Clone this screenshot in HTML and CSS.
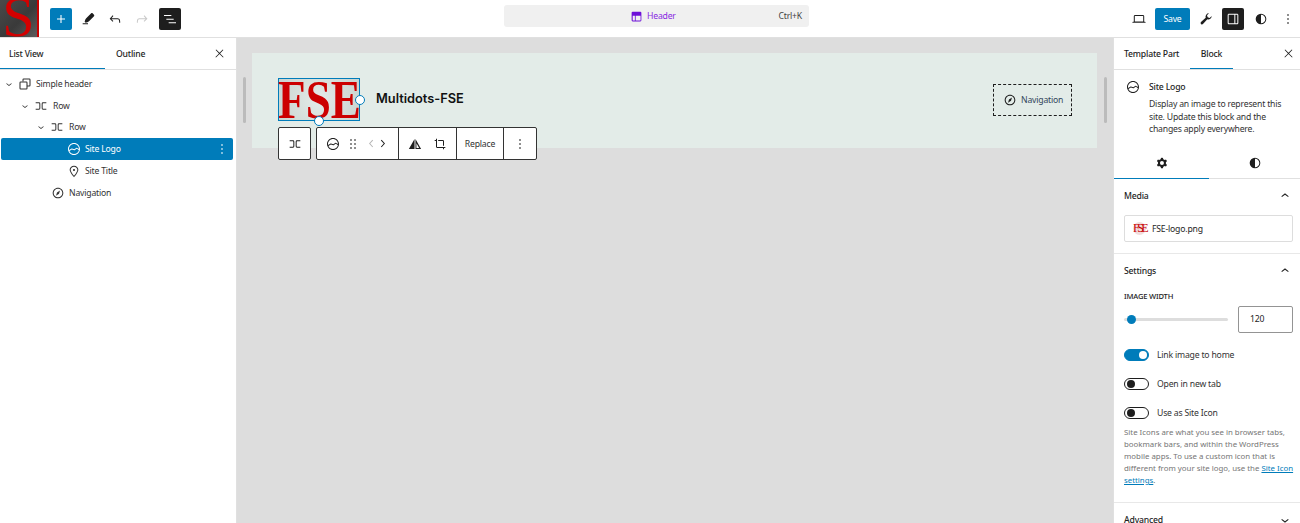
FILE: index.html
```html
<!DOCTYPE html>
<html lang="en">
<head>
<meta charset="utf-8">
<title>Site Editor</title>
<link rel="stylesheet" href="styles.css">
</head>
<body>
<svg class="defs" width="0" height="0" aria-hidden="true">
<symbol id="i-plus" viewBox="0 0 24 24"><path d="M18 11.2h-5.2V6h-1.6v5.2H6v1.6h5.2V18h1.6v-5.2H18z"/></symbol>
<symbol id="i-pen" viewBox="0 0 24 24"><path d="M4 20h8v-1.5H4V20zM18.9 3.5c-.6-.6-1.5-.6-2.1 0l-7.5 7.5c-1.3 1.3-1.7 3.3-2.3 5.1l1.4 1.4c1.8-.6 3.8-1 5.1-2.3l7.5-7.5c.6-.6.6-1.5 0-2.1z"/></symbol>
<symbol id="i-undo" viewBox="0 0 24 24"><path d="M18.3 11.7c-.6-.6-1.4-.9-2.3-.9H6.7l2.9-3.3-1.1-1-4.5 5L8.5 16l1-1-2.7-2.7H16c.5 0 .9.2 1.3.5 1 1 1 3.4 1 4.5v.3h1.5v-.2c0-1.5 0-4.3-1.5-5.7z"/></symbol>
<symbol id="i-redo" viewBox="0 0 24 24"><path d="M15.6 6.5l-1.1 1 2.9 3.3H8c-.9 0-1.7.3-2.3.9-1.4 1.5-1.4 4.2-1.4 5.6v.2h1.5v-.3c0-1.1 0-3.5 1-4.5.3-.3.7-.5 1.3-.5h9.2L14.5 15l1.1 1.1 4.6-4.6-4.6-5z"/></symbol>
<symbol id="i-list" viewBox="0 0 24 24"><path d="M3 6h11v1.5H3V6zm3.5 5.5h11V13h-11v-1.5zM21 17H10v1.5h11V17z"/></symbol>
<symbol id="i-laptop" viewBox="0 0 24 24"><path d="M20.5 16h-.7V8c0-1.1-.9-2-2-2H6.2c-1.1 0-2 .9-2 2v8h-.7c-.8 0-1.5.7-1.5 1.5h20c0-.8-.7-1.5-1.5-1.5zM5.7 8c0-.3.2-.5.5-.5h11.6c.3 0 .5.2.5.5v7.6H5.7V8z"/></symbol>
<symbol id="i-wrench" viewBox="0 0 24 24"><path d="M20.5 7.5a5 5 0 0 1-6.5 5l-6.5 7a2 2 0 0 1-3-3l7-6.5a5 5 0 0 1 5-6.5l-3 3 1 3 3 1z"/></symbol>
<symbol id="i-sidebar" viewBox="0 0 24 24"><path d="M18 4H6c-1.1 0-2 .9-2 2v12c0 1.1.9 2 2 2h12c1.1 0 2-.9 2-2V6c0-1.1-.9-2-2-2zM14 18.5H6c-.3 0-.5-.2-.5-.5V6c0-.3.2-.5.5-.5h8v13zm4.500-.5c0 .3-.2.5-.5.5h-2.500v-13H18c.3 0 .5.2.5.5v12z"/></symbol>
<symbol id="i-half" viewBox="0 0 24 24"><path fill-rule="evenodd" d="M12 4a8 8 0 1 0 0 16 8 8 0 0 0 0-16zm0 1.500a6.500 6.500 0 0 1 0 13z"/></symbol>
<symbol id="i-more" viewBox="0 0 24 24"><path d="M13 19h-2v-2h2v2zm0-6h-2v-2h2v2zm0-6h-2V5h2v2z"/></symbol>
<symbol id="i-close" viewBox="0 0 24 24"><path d="M13 11.800l6.100-6.300-1-1-6.100 6.200-6.100-6.200-1 1 6.100 6.300-6.500 6.700 1 1 6.500-6.600 6.500 6.600 1-1z"/></symbol>
<symbol id="i-down" viewBox="0 0 24 24"><path d="M17.500 11.600L12 16l-5.500-4.400.9-1.200L12 14l4.500-3.600 1 1.200z"/></symbol>
<symbol id="i-up" viewBox="0 0 24 24"><path d="M6.500 12.400L12 8l5.500 4.400-.9 1.200L12 10l-4.500 3.600-1-1.200z"/></symbol>
<symbol id="i-row" viewBox="0 0 24 24"><path d="M4 6.500h5a2 2 0 0 1 2 2v7a2 2 0 0 1-2 2H4V16h5a.5.5 0 0 0 .5-.5v-7A.5.5 0 0 0 9 8H4V6.500Zm16 0h-5a2 2 0 0 0-2 2v7a2 2 0 0 0 2 2h5V16h-5a.5.5 0 0 1-.5-.5v-7A.5.5 0 0 1 15 8h5V6.500Z"/></symbol>
<symbol id="i-pattern" viewBox="0 0 24 24"><path fill="none" stroke="currentColor" stroke-width="1.600" d="M9 8V5.500a1 1 0 0 1 1-1h8.500a1 1 0 0 1 1 1V14a1 1 0 0 1-1 1H15M5.500 9H14a1 1 0 0 1 1 1v8.500a1 1 0 0 1-1 1H5.500a1 1 0 0 1-1-1V10a1 1 0 0 1 1-1z"/></symbol>
<symbol id="i-logo" viewBox="0 0 24 24"><path d="M12 3c-5 0-9 4-9 9s4 9 9 9 9-4 9-9-4-9-9-9zm0 1.500c4.100 0 7.500 3.400 7.500 7.500v.1c-1.400-.8-3.300-1.700-3.400-1.800-.2-.1-.5-.1-.8.1l-2.900 2.100L9 11.300c-.2-.1-.4 0-.6.1l-3.700 2.200c-.1-.5-.2-1-.2-1.500 0-4.200 3.400-7.600 7.500-7.600zm0 15c-3.100 0-5.700-1.900-6.900-4.500l3.700-2.200 3.500 1.200c.2.1.5 0 .7-.1l2.900-2.100c.8.4 2.500 1.200 3.500 1.900-.9 3.300-3.900 5.800-7.400 5.800z"/></symbol>
<symbol id="i-pin" viewBox="0 0 24 24"><path d="M12 9c-.8 0-1.500.7-1.500 1.500S11.200 12 12 12s1.500-.7 1.500-1.500S12.800 9 12 9zm0-5c-3.600 0-6.500 2.800-6.500 6.200 0 .8.3 1.800.9 3.100.5 1.100 1.200 2.300 2 3.600.7 1 3 3.800 3.200 3.900l.4.5.4-.5c.2-.2 2.600-2.900 3.200-3.900.8-1.200 1.500-2.500 2-3.600.6-1.300.9-2.300.9-3.100C18.500 6.800 15.600 4 12 4zm4.300 8.700c-.5 1-1.100 2.200-1.900 3.400-.5.7-1.700 2.200-2.400 3-.7-.8-1.900-2.300-2.400-3-.8-1.200-1.400-2.300-1.900-3.300-.6-1.400-.7-2.200-.7-2.500 0-2.600 2.200-4.700 5-4.700s5 2.100 5 4.700c0 .2-.1 1-.7 2.400z"/></symbol>
<symbol id="i-nav" viewBox="0 0 24 24"><path d="M12 4c-4.400 0-8 3.600-8 8s3.600 8 8 8 8-3.600 8-8-3.600-8-8-8zm0 14.500c-3.600 0-6.500-2.900-6.500-6.500S8.400 5.500 12 5.500s6.500 2.900 6.500 6.500-2.900 6.500-6.500 6.500zM9 16l4.500-3L15 8.400l-4.500 3L9 16z"/></symbol>
<symbol id="i-drag" viewBox="0 0 24 24"><path d="M8 7h2V5H8v2zm0 6h2v-2H8v2zm0 6h2v-2H8v2zm6-14v2h2V5h-2zm0 8h2v-2h-2v2zm0 6h2v-2h-2v2z"/></symbol>
<symbol id="i-left" viewBox="0 0 24 24"><path d="M14.600 7l-1.200-1L8 12l5.400 6 1.200-1-4.600-5z"/></symbol>
<symbol id="i-right" viewBox="0 0 24 24"><path d="M10.600 6L9.400 7l4.600 5-4.600 5 1.200 1 5.400-6z"/></symbol>
<symbol id="i-flip" viewBox="0 0 24 24"><path fill-rule="evenodd" d="M11.300 4.500v15H2.800zM12.700 4.500l8.500 15h-8.500zM14.200 11v7h4z"/></symbol>
<symbol id="i-crop" viewBox="0 0 24 24"><path d="M18 20v-2h2v-1.500H7.750a.25.25 0 0 1-.25-.25V4H6v2H4v1.500h2v8.750c0 .966.784 1.750 1.750 1.750h8.750v2H18ZM9.273 7.500h6.977a.25.25 0 0 1 .25.25v6.977H18V7.750A1.750 1.750 0 0 0 16.250 6H9.273v1.500Z"/></symbol>
<symbol id="i-cog" viewBox="0 0 24 24"><path fill-rule="evenodd" d="M10.289 4.836A1 1 0 0 1 11.275 4h1.306a1 1 0 0 1 .987.836l.244 1.466c.787.26 1.503.679 2.108 1.218l1.393-.522a1 1 0 0 1 1.216.437l.653 1.130a1 1 0 0 1-.23 1.273l-1.148.944a6.025 6.025 0 0 1 0 2.435l1.149.946a1 1 0 0 1 .23 1.272l-.653 1.130a1 1 0 0 1-1.216.437l-1.394-.522c-.605.54-1.320.958-2.108 1.218l-.244 1.466a1 1 0 0 1-.987.836h-1.306a1 1 0 0 1-.986-.836l-.244-1.466a5.995 5.995 0 0 1-2.108-1.218l-1.394.522a1 1 0 0 1-1.217-.436l-.653-1.131a1 1 0 0 1 .23-1.272l1.149-.946a6.026 6.026 0 0 1 0-2.435l-1.148-.944a1 1 0 0 1-.23-1.272l.653-1.131a1 1 0 0 1 1.217-.437l1.393.522a5.994 5.994 0 0 1 2.108-1.218l.244-1.466ZM14.929 12a3 3 0 1 1-6 0 3 3 0 0 1 6 0Z"/></symbol>
<symbol id="i-template" viewBox="0 0 24 24"><path fill-rule="evenodd" d="M5 3h14a2 2 0 0 1 2 2v14a2 2 0 0 1-2 2H5a2 2 0 0 1-2-2V5a2 2 0 0 1 2-2zm0 7.500V19a.5.5 0 0 0 .5.5h3.500v-9zm5.500 0v9H18.500a1 1 0 0 0 1-1v-8z"/></symbol>
</svg>

<div class="app">
  <header class="topbar">
    <div class="top-left">
      <a class="site-badge"><span>S</span></a>
      <div class="tools">
        <button class="btn btn-add"><svg class="ic"><use href="#i-plus"/></svg></button>
        <button class="btn"><svg class="ic"><use href="#i-pen"/></svg></button>
        <button class="btn"><svg class="ic"><use href="#i-undo"/></svg></button>
        <button class="btn btn-off"><svg class="ic"><use href="#i-redo"/></svg></button>
        <button class="btn btn-dark btn-list"><svg class="ic"><use href="#i-list"/></svg></button>
      </div>
    </div>
    <div class="command">
      <div class="command-title"><svg class="ic ic-template"><use href="#i-template"/></svg><span>Header</span></div>
      <span class="shortcut">Ctrl+K</span>
    </div>
    <div class="top-right">
      <button class="btn"><svg class="ic"><use href="#i-laptop"/></svg></button>
      <button class="save">Save</button>
      <button class="btn"><svg class="ic"><use href="#i-wrench"/></svg></button>
      <button class="btn btn-dark btn-side"><svg class="ic"><use href="#i-sidebar"/></svg></button>
      <button class="btn"><svg class="ic"><use href="#i-half"/></svg></button>
      <button class="btn"><svg class="ic"><use href="#i-more"/></svg></button>
    </div>
  </header>

  <div class="main">
    <aside class="left-panel">
      <div class="tabs">
        <div class="tab tab-on tab-list">List View</div>
        <div class="tab tab-outline">Outline</div>
        <svg class="ic tabs-close"><use href="#i-close"/></svg>
      </div>
      <ul class="tree">
        <li class="node lv0"><svg class="ic-s"><use href="#i-down"/></svg><svg class="ic"><use href="#i-pattern"/></svg><span>Simple header</span></li>
        <li class="node lv1"><svg class="ic-s"><use href="#i-down"/></svg><svg class="ic"><use href="#i-row"/></svg><span>Row</span></li>
        <li class="node lv2"><svg class="ic-s"><use href="#i-down"/></svg><svg class="ic"><use href="#i-row"/></svg><span>Row</span></li>
        <li class="node lv3 node-on"><svg class="ic"><use href="#i-logo"/></svg><span>Site Logo</span><svg class="ic node-more"><use href="#i-more"/></svg></li>
        <li class="node lv3"><svg class="ic"><use href="#i-pin"/></svg><span>Site Title</span></li>
        <li class="node lv2b"><svg class="ic"><use href="#i-nav"/></svg><span>Navigation</span></li>
      </ul>
    </aside>

    <section class="canvas">
      <i class="grip grip-left"></i>
      <div class="frame">
        <div class="frame-brand">
          <div class="logo-box">
            <span class="logo-text">FSE</span>
            <i class="handle handle-right"></i>
            <i class="handle handle-bottom"></i>
          </div>
          <div class="site-name">Multidots-FSE</div>
        </div>
        <div class="nav-holder"><svg class="ic"><use href="#i-nav"/></svg><span>Navigation</span></div>
      </div>
      <i class="grip grip-right"></i>

      <div class="block-toolbar">
        <div class="tb-group"><button class="tb-btn"><svg class="ic"><use href="#i-row"/></svg></button></div>
        <div class="tb-group">
          <div class="tb-sec tb-sec-a">
            <svg class="ic"><use href="#i-logo"/></svg>
            <svg class="ic"><use href="#i-drag"/></svg>
            <span class="movers"><svg class="ic-m off"><use href="#i-left"/></svg><svg class="ic-m ic-next"><use href="#i-right"/></svg></span>
          </div>
          <div class="tb-sec tb-sec-b">
            <svg class="ic"><use href="#i-flip"/></svg>
            <svg class="ic"><use href="#i-crop"/></svg>
          </div>
          <div class="tb-sec tb-sec-c">Replace</div>
          <div class="tb-sec tb-sec-d"><svg class="ic"><use href="#i-more"/></svg></div>
        </div>
      </div>
    </section>

    <aside class="right-panel">
      <div class="tabs">
        <div class="tab tab-part">Template Part</div>
        <div class="tab tab-on tab-block">Block</div>
        <svg class="ic tabs-close tabs-close-r"><use href="#i-close"/></svg>
      </div>
      <div class="card">
        <svg class="ic"><use href="#i-logo"/></svg>
        <div class="card-body">
          <h2 class="card-title">Site Logo</h2>
          <p class="card-desc">Display an image to represent this site. Update this block and the changes apply everywhere.</p>
        </div>
      </div>
      <div class="style-tabs">
        <div class="style-tab style-tab-on"><svg class="ic"><use href="#i-cog"/></svg></div>
        <div class="style-tab"><svg class="ic"><use href="#i-half"/></svg></div>
      </div>
      <section class="panel panel-media">
        <div class="panel-head"><h3>Media</h3><svg class="ic"><use href="#i-up"/></svg></div>
        <div class="media-file"><span class="media-thumb">FSE</span><span>FSE-logo.png</span></div>
      </section>
      <section class="panel panel-settings">
        <div class="panel-head"><h3>Settings</h3><svg class="ic"><use href="#i-up"/></svg></div>
        <div class="field-label">IMAGE WIDTH</div>
        <div class="range-row">
          <div class="range"><i class="range-thumb"></i></div>
          <div class="num-input">120</div>
        </div>
        <div class="toggle-row"><i class="toggle toggle-on"></i><span>Link image to home</span></div>
        <div class="toggle-row"><i class="toggle"></i><span>Open in new tab</span></div>
        <div class="toggle-row toggle-row-last"><i class="toggle"></i><span>Use as Site Icon</span></div>
        <p class="help">Site Icons are what you see in browser tabs, bookmark bars, and within the WordPress mobile apps. To use a custom icon that is different from your site logo, use the <a>Site Icon settings</a>.</p>
      </section>
      <section class="panel panel-adv">
        <div class="panel-head"><h3>Advanced</h3><svg class="ic"><use href="#i-down"/></svg></div>
      </section>
    </aside>
  </div>
</div>
</body>
</html>
```

FILE: styles.css
```css
* { box-sizing: border-box; }
html, body { margin: 0; padding: 0; }
body { font-family: "Noto Sans", "Open Sans", sans-serif; font-size: 8.670px; letter-spacing: -.2px; color: #1e1e1e; background: #fff; }
.defs { position: absolute; }
svg { fill: currentColor; display: block; flex: none; }
.ic { width: 16px; height: 16px; }
.ic-s { width: 12px; height: 12px; }
.ic-m { width: 15px; height: 15px; }
button { font: inherit; letter-spacing: inherit; color: inherit; background: none; border: 0; padding: 0; }
h2, h3, p, ul { margin: 0; padding: 0; list-style: none; font: inherit; }

.app { width: 1300px; height: 523px; display: flex; flex-direction: column; overflow: hidden; }

/* top bar */
.topbar { height: 38px; flex: none; display: flex; border-bottom: 1px solid #e0e0e0; }
.top-left { flex: 0 0 504px; display: flex; }
.site-badge { width: 39px; height: 37px; background: linear-gradient(135deg, #4a4a4a, #3a3a3a 55%, #5c5c5c); border-right: 2px solid #c80000; overflow: hidden; display: flex; justify-content: center; }
.site-badge span { font-family: "Liberation Serif", serif; font-size: 58px; line-height: 37px; color: #d30000; margin-top: -2px; letter-spacing: 0; }
.tools { display: flex; align-items: center; gap: 5px; padding-left: 11px; }
.btn { width: 22px; height: 22px; display: flex; align-items: center; justify-content: center; border-radius: 2px; }
.btn-add { background: #007cba; color: #fff; }
.btn-off { color: #c9c9c9; }
.btn-dark { background: #1e1e1e; color: #fff; }
.btn-list { margin-left: 1px; }
.btn-side { margin-right: 1px; }

.command { flex: 0 0 305px; height: 22px; margin-top: 5px; background: #f0f0f0; border-radius: 3px; display: flex; align-items: center; padding: 0 7px 0 126px; justify-content: space-between; }
.command-title { display: flex; align-items: center; gap: 4px; color: #8a2be2; }
.ic-template { width: 13px; height: 13px; color: #6d10d8; }
.shortcut { color: #444; }

.top-right { flex: 1; display: flex; align-items: center; justify-content: flex-end; gap: 5px; padding-right: 1px; }
.save { width: 35px; height: 22px; background: #007cba; color: #fff; border-radius: 2px; text-align: center; }

/* shared */
.main { flex: 1; display: flex; min-height: 0; }
.tabs { height: 32px; display: flex; align-items: flex-start; border-bottom: 1px solid #e0e0e0; }
.tab { height: 31px; line-height: 33px; font-weight: 500; }
.tab-on { border-bottom: 1.500px solid #007cba; }
.tabs-close { width: 13px; height: 13px; margin: 9px 10px 0 auto; }
.tabs-close-r { margin-right: 5px; }

/* list view */
.left-panel { flex: 0 0 237px; border-right: 1px solid #e0e0e0; }
.tab-list { width: 105px; padding-left: 9px; }
.tab-outline { padding-left: 11px; }
.tree { padding: 3px 3px 0 1px; }
.node { height: 21.800px; display: flex; align-items: center; gap: 2px; color: #333; border-radius: 2px; }
.node span { margin-left: 1px; }
.lv0 { padding-left: 2px; }
.lv1 { padding-left: 18px; }
.lv2 { padding-left: 34px; }
.lv1 span, .lv2 span { margin-left: 2px; }
.lv3 { padding-left: 65px; gap: 3px; }
.lv3 span { margin-left: 0; }
.lv2b { padding-left: 49px; gap: 2px; }
.node-on { background: #007cba; color: #fff; }
.node-more { margin-left: auto; margin-right: 3px; }

/* canvas */
.canvas { flex: 1; background: #ddd; position: relative; padding: 15px 16px 0 15px; min-width: 0; }
.grip { position: absolute; width: 3px; height: 46px; top: 39px; background: #bbb; border-radius: 2px; }
.grip-left { left: 6px; }
.grip-right { right: 6px; }
.frame { height: 95px; background: #e3ece8; display: flex; align-items: center; justify-content: space-between; padding: 0 25px 0 26px; }
.frame-brand { display: flex; align-items: center; gap: 16px; }
.logo-box { width: 82px; height: 43px; border: 1px solid #007cba; background: radial-gradient(circle, #e4ebe8, #c9d4d0); position: relative; display: flex; align-items: center; justify-content: center; margin-top: -2px; }
.logo-text { font-family: "Liberation Serif", serif; font-size: 55px; font-weight: 700; line-height: 41px; color: #cc0000; letter-spacing: 0; white-space: nowrap; transform: scaleX(.82); }
.handle { position: absolute; width: 10px; height: 10px; background: #fff; border: 1.500px solid #007cba; border-radius: 50%; }
.handle-right { right: -6px; top: 16px; }
.handle-bottom { bottom: -6px; left: 35px; }
.site-name { font-family: Inter, "Noto Sans", sans-serif; font-size: 12.800px; font-weight: 600; color: #111; letter-spacing: 0; margin-top: -5px; }
.nav-holder { width: 79px; height: 32px; border: 1px dashed #1e1e1e; display: flex; align-items: center; gap: 3px; padding-left: 8px; color: #33475b; margin-top: -1px; }
.nav-holder .ic { color: #1e1e1e; }

.block-toolbar { position: absolute; left: 41px; top: 89px; display: flex; gap: 5px; }
.tb-group { height: 33px; background: #fff; border: 1px solid #333; border-radius: 2px; display: flex; }
.tb-btn { width: 31px; display: flex; align-items: center; justify-content: center; }
.tb-sec { display: flex; align-items: center; border-left: 1px solid #333; }
.tb-sec:first-child { border-left: 0; }
.tb-sec-a { width: 81px; padding-left: 8px; gap: 4px; }
.movers { display: flex; margin-left: -1px; }
.ic-next { margin-left: -4px; }
.off { color: #b5b5b5; }
.tb-sec-b { width: 58px; padding-left: 8px; gap: 9px; }
.tb-sec-c { width: 47px; justify-content: center; color: #333; }
.tb-sec-d { width: 33px; justify-content: center; }

/* sidebar */
.right-panel { flex: 0 0 187px; border-left: 1px solid #e0e0e0; overflow: hidden; }
.tab-part { width: 66px; margin-left: 10px; }
.tab-block { width: 43px; text-align: center; }
.card { display: flex; gap: 8px; padding: 9px 12px 0 11px; height: 78px; }
.card-title { font-weight: 500; line-height: 16px; }
.card-desc { line-height: 12.500px; color: #333; margin-top: 3px; }
.style-tabs { display: flex; height: 31px; border-bottom: 1px solid #e0e0e0; }
.style-tab { flex: 1; display: flex; align-items: center; justify-content: center; }
.style-tab-on { flex: 0 0 95px; border-bottom: 1.500px solid #007cba; height: 31px; }
.panel { border-bottom: 1px solid #e8e8e8; padding: 0 7px 0 10px; }
.panel-head { height: 34px; display: flex; align-items: center; justify-content: space-between; padding-bottom: 1px; }
.panel-head h3 { font-weight: 500; }
.panel-media { height: 75px; }
.media-file { height: 27px; width: 169px; border: 1px solid #ddd; display: flex; align-items: center; gap: 6px; padding-left: 8px; border-radius: 2px; margin-top: 2px; }
.media-thumb { width: 13px; height: 13px; border-radius: 50%; background: #f0dcdc; color: #c80000; font-family: "Liberation Serif", serif; font-size: 12px; line-height: 13px; text-align: center; letter-spacing: -2.500px; white-space: nowrap; }
.panel-settings { height: 249px; }
.field-label { font-size: 7.600px; font-weight: 500; line-height: 12px; margin-top: 2px; }
.range-row { display: flex; align-items: center; justify-content: space-between; margin-top: 4px; }
.range { width: 104px; height: 3px; background: #ddd; border-radius: 2px; position: relative; }
.range-thumb { position: absolute; left: 3px; top: -3px; width: 9px; height: 9px; background: #007cba; border-radius: 50%; }
.num-input { width: 55px; height: 27px; border: 1px solid #949494; border-radius: 2px; line-height: 25px; padding-left: 11px; }
.toggle-row { display: flex; align-items: center; gap: 8px; height: 29px; color: #333; }
.range-row + .toggle-row { margin-top: 7px; }
.toggle { width: 25px; height: 12px; border-radius: 6px; border: 1px solid #1e1e1e; position: relative; background: #fff; flex: none; }
.toggle::after { content: ""; position: absolute; left: 1.500px; top: 1px; width: 8px; height: 8px; background: #1e1e1e; border-radius: 50%; }
.toggle-on { background: #007cba; border-color: #007cba; }
.toggle-on::after { left: auto; right: 1.500px; background: #fff; }
.help { font-size: 7.850px; letter-spacing: 0; line-height: 12px; color: #757575; margin: -1px -5px 0 0; }
.help a { color: #007cba; text-decoration: underline; }
.panel-adv { border-bottom: 0; }
```
